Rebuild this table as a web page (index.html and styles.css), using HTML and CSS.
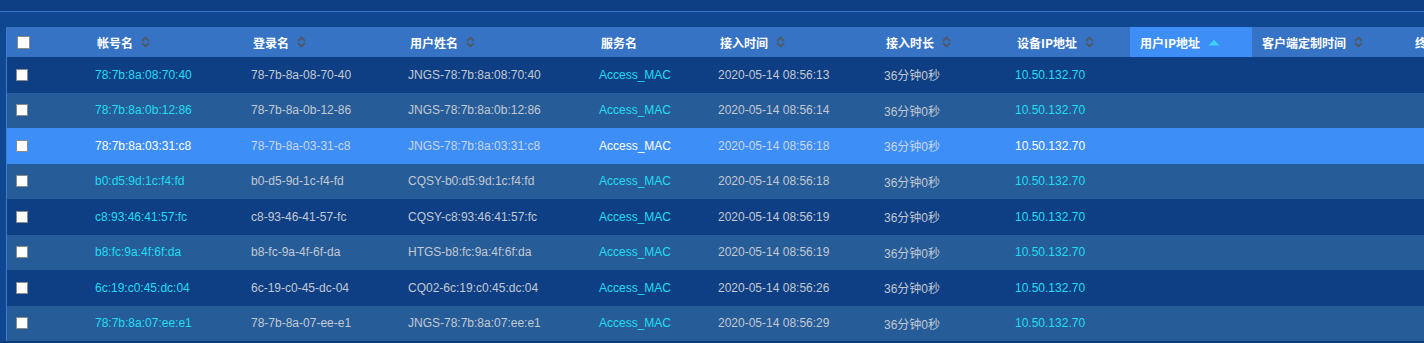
FILE: index.html
```html
<!DOCTYPE html>
<html>
<head>
<meta charset="utf-8">
<link rel="stylesheet" href="styles.css">
</head>
<body>
<div class="topbar"></div>
<div class="panel">
  <div class="gridwrap">
  <table class="grid">
    <colgroup>
      <col class="c0"><col class="c1"><col class="c2"><col class="c3"><col class="c4"><col class="c5"><col class="c6"><col class="c7"><col class="c8"><col class="c9"><col class="c10">
    </colgroup>
    <thead>
      <tr>
        <th class="chk"><span class="box hbox"></span></th>
        <th><span class="h">帐号名<svg class="sort" width="9" height="12" viewBox="0 0 9 12"><path d="M1 5L4.5 1.5L8 5M1 7L4.5 10.5L8 7"/></svg></span></th>
        <th><span class="h">登录名<svg class="sort" width="9" height="12" viewBox="0 0 9 12"><path d="M1 5L4.5 1.5L8 5M1 7L4.5 10.5L8 7"/></svg></span></th>
        <th><span class="h">用户姓名<svg class="sort" width="9" height="12" viewBox="0 0 9 12"><path d="M1 5L4.5 1.5L8 5M1 7L4.5 10.5L8 7"/></svg></span></th>
        <th><span class="h">服务名</span></th>
        <th><span class="h">接入时间<svg class="sort" width="9" height="12" viewBox="0 0 9 12"><path d="M1 5L4.5 1.5L8 5M1 7L4.5 10.5L8 7"/></svg></span></th>
        <th><span class="h">接入时长<svg class="sort" width="9" height="12" viewBox="0 0 9 12"><path d="M1 5L4.5 1.5L8 5M1 7L4.5 10.5L8 7"/></svg></span></th>
        <th><span class="h">设备IP地址<svg class="sort" width="9" height="12" viewBox="0 0 9 12"><path d="M1 5L4.5 1.5L8 5M1 7L4.5 10.5L8 7"/></svg></span></th>
        <th class="active"><span class="h">用户IP地址<svg class="asc" width="12" height="7" viewBox="0 0 12 7"><path d="M0.5 6.5L6 0.8L11.5 6.5Z"/></svg></span></th>
        <th><span class="h">客户端定制时间<svg class="sort" width="9" height="12" viewBox="0 0 9 12"><path d="M1 5L4.5 1.5L8 5M1 7L4.5 10.5L8 7"/></svg></span></th>
        <th><span class="h">终端类型</span></th>
      </tr>
    </thead>
    <tbody>
      <tr class="odd">
        <td class="chk"><span class="box"></span></td>
        <td class="link">78:7b:8a:08:70:40</td><td>78-7b-8a-08-70-40</td><td>JNGS-78:7b:8a:08:70:40</td><td class="link">Access_MAC</td><td>2020-05-14 08:56:13</td><td>36分钟0秒</td><td class="link">10.50.132.70</td><td></td><td></td><td></td>
      </tr>
      <tr class="even">
        <td class="chk"><span class="box"></span></td>
        <td class="link">78:7b:8a:0b:12:86</td><td>78-7b-8a-0b-12-86</td><td>JNGS-78:7b:8a:0b:12:86</td><td class="link">Access_MAC</td><td>2020-05-14 08:56:14</td><td>36分钟0秒</td><td class="link">10.50.132.70</td><td></td><td></td><td></td>
      </tr>
      <tr class="sel">
        <td class="chk"><span class="box"></span></td>
        <td class="link">78:7b:8a:03:31:c8</td><td>78-7b-8a-03-31-c8</td><td>JNGS-78:7b:8a:03:31:c8</td><td class="link">Access_MAC</td><td>2020-05-14 08:56:18</td><td>36分钟0秒</td><td class="link">10.50.132.70</td><td></td><td></td><td></td>
      </tr>
      <tr class="even">
        <td class="chk"><span class="box"></span></td>
        <td class="link">b0:d5:9d:1c:f4:fd</td><td>b0-d5-9d-1c-f4-fd</td><td>CQSY-b0:d5:9d:1c:f4:fd</td><td class="link">Access_MAC</td><td>2020-05-14 08:56:18</td><td>36分钟0秒</td><td class="link">10.50.132.70</td><td></td><td></td><td></td>
      </tr>
      <tr class="odd">
        <td class="chk"><span class="box"></span></td>
        <td class="link">c8:93:46:41:57:fc</td><td>c8-93-46-41-57-fc</td><td>CQSY-c8:93:46:41:57:fc</td><td class="link">Access_MAC</td><td>2020-05-14 08:56:19</td><td>36分钟0秒</td><td class="link">10.50.132.70</td><td></td><td></td><td></td>
      </tr>
      <tr class="even">
        <td class="chk"><span class="box"></span></td>
        <td class="link">b8:fc:9a:4f:6f:da</td><td>b8-fc-9a-4f-6f-da</td><td>HTGS-b8:fc:9a:4f:6f:da</td><td class="link">Access_MAC</td><td>2020-05-14 08:56:19</td><td>36分钟0秒</td><td class="link">10.50.132.70</td><td></td><td></td><td></td>
      </tr>
      <tr class="odd">
        <td class="chk"><span class="box"></span></td>
        <td class="link">6c:19:c0:45:dc:04</td><td>6c-19-c0-45-dc-04</td><td>CQ02-6c:19:c0:45:dc:04</td><td class="link">Access_MAC</td><td>2020-05-14 08:56:26</td><td>36分钟0秒</td><td class="link">10.50.132.70</td><td></td><td></td><td></td>
      </tr>
      <tr class="even">
        <td class="chk"><span class="box"></span></td>
        <td class="link">78:7b:8a:07:ee:e1</td><td>78-7b-8a-07-ee-e1</td><td>JNGS-78:7b:8a:07:ee:e1</td><td class="link">Access_MAC</td><td>2020-05-14 08:56:29</td><td>36分钟0秒</td><td class="link">10.50.132.70</td><td></td><td></td><td></td>
      </tr>
    </tbody>
  </table>
  </div>
</div>
</body>
</html>
```

FILE: styles.css
```css
html, body {
  margin: 0;
  padding: 0;
}
body {
  background: #0e3f83;
  font-family: "Liberation Sans", Arial, "Noto Sans CJK SC", sans-serif;
  font-size: 12px;
  overflow: hidden;
  width: 1424px;
  height: 343px;
}
.topbar {
  height: 11px;
  border-bottom: 1px solid #3a79cf;
  background: #0e3f83;
}
.panel {
  background: #0f4790;
  padding: 15px 0 0 6px;
  height: 331px;
  box-sizing: border-box;
  border-bottom: 2px solid #0c3a7a;
  overflow: hidden;
}
.gridwrap {
  border-left: 1px solid #3a7bd5;
  width: 1570px;
}
.grid {
  border-collapse: collapse;
  border-spacing: 0;
  table-layout: fixed;
  width: 1570px;
}
.c0 { width: 80px; }
.c1 { width: 156px; }
.c2 { width: 157px; }
.c3 { width: 191px; }
.c4 { width: 119px; }
.c5 { width: 166px; }
.c6 { width: 131px; }
.c7 { width: 123px; }
.c8 { width: 122px; }
.c9 { width: 153px; }
.c10 { width: 172px; }
thead tr {
  height: 30px;
}
th {
  background: #3673c4;
  padding: 0 0 0 10px;
  text-align: left;
  color: #ffffff;
  font-weight: bold;
  font-family: "Noto Sans CJK SC", "Liberation Sans", sans-serif;
  font-size: 12px;
  white-space: nowrap;
  overflow: hidden;
  vertical-align: middle;
}
th.active {
  background: #3d8ef7;
}
.h {
  display: inline-flex;
  align-items: center;
  gap: 8px;
}
.sort path {
  fill: none;
  stroke: #4e5a68;
  stroke-width: 1.8;
}
.asc path {
  fill: #3fd0f5;
}
th.chk, td.chk {
  padding: 0 0 0 9px;
}
.box {
  display: block;
  width: 10px;
  height: 10px;
  background: #ffffff;
  border: 1px solid #8b8b8b;
}
.hbox {
  width: 11px;
  height: 11px;
  margin-left: 1px;
}
tbody tr {
  height: 35.5px;
}
tr.odd td { background: #0e3f84; }
tr.even td { background: #265c98; }
tr.sel td { background: #3d8ef7; }
td {
  padding: 0 0 0 8px;
  color: #c3c9d3;
  white-space: nowrap;
  overflow: hidden;
  vertical-align: middle;
  font-family: "Liberation Sans", Arial, "Noto Sans CJK SC", sans-serif;
}
td.link { color: #22dcf2; }
tr.sel td { color: #c9d5e8; }
tr.sel td.link { color: #ffffff; }
```
